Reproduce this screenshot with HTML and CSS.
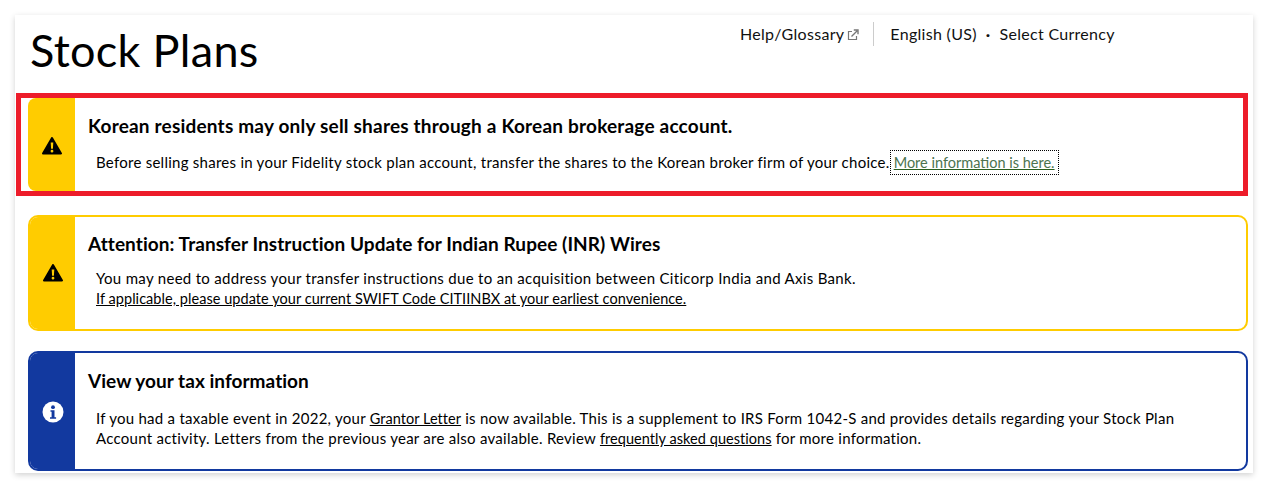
FILE: index.html
```html
<!DOCTYPE html>
<html lang="en">
<head>
<meta charset="utf-8">
<title>Stock Plans</title>
<link rel="stylesheet" href="styles.css">
</head>
<body>
<main class="card">
  <header class="top">
    <h1 class="title">Stock Plans</h1>
    <nav class="util">
      <a class="util-link">Help/Glossary
        <svg class="ext" viewBox="0 0 12 12" width="12" height="12" aria-hidden="true"><path d="M9.5 7v3.5h-8v-8H5" fill="none" stroke="#777" stroke-width="1.2"/><path d="M4.5 7.5 10 2M6.8 1h4.2v4.2" fill="none" stroke="#777" stroke-width="1.4"/></svg>
      </a>
      <span class="divider"></span>
      <span class="util-link">English (US)</span>
      <span class="dot">·</span>
      <span class="util-link">Select Currency</span>
    </nav>
  </header>

  <div class="highlight">
    <section class="alert alert-bare">
      <div class="strip strip-warn">
        <svg class="icon icon-low" viewBox="0 0 20 18" aria-hidden="true"><path d="M10 1 19 16.5H1Z" fill="#000" stroke="#000" stroke-width="2" stroke-linejoin="round"/><path d="M8.7 5.5h2.6l-.4 6.3H9.1ZM10 12.8a1.4 1.4 0 1 1 0 2.8 1.4 1.4 0 0 1 0-2.8Z" fill="#fc0"/></svg>
      </div>
      <div class="content content-first">
        <h2 class="heading">Korean residents may only sell shares through a Korean brokerage account.</h2>
        <p class="text">Before selling shares in your Fidelity stock plan account, transfer the shares to the Korean broker firm of your choice. <a class="focus-link">More information is here.</a></p>
      </div>
    </section>
  </div>

  <section class="alert alert-warn">
    <div class="strip strip-warn">
      <svg class="icon" viewBox="0 0 20 18" aria-hidden="true"><path d="M10 1 19 16.5H1Z" fill="#000" stroke="#000" stroke-width="2" stroke-linejoin="round"/><path d="M8.7 5.5h2.6l-.4 6.3H9.1ZM10 12.8a1.4 1.4 0 1 1 0 2.8 1.4 1.4 0 0 1 0-2.8Z" fill="#fc0"/></svg>
    </div>
    <div class="content content-second">
      <h2 class="heading">Attention: Transfer Instruction Update for Indian Rupee (INR) Wires</h2>
      <p class="text">You may need to address your transfer instructions due to an acquisition between Citicorp India and Axis Bank.<br><a class="link">If applicable, please update your current SWIFT Code CITIINBX at your earliest convenience.</a></p>
    </div>
  </section>

  <section class="alert alert-info">
    <div class="strip strip-info">
      <svg class="icon icon-info" viewBox="0 0 22 22" aria-hidden="true"><circle cx="11" cy="11" r="10.5" fill="#fff"/><circle cx="11" cy="6.2" r="1.9" fill="#12399f"/><path d="M8.5 9.2h4v7h1.6v1.6H8v-1.6h1.6v-5.4H8.5Z" fill="#12399f"/></svg>
    </div>
    <div class="content content-third">
      <h2 class="heading">View your tax information</h2>
      <p class="text">If you had a taxable event in 2022, your <a class="link">Grantor Letter</a> is now available. This is a supplement to IRS Form 1042-S and provides details regarding your Stock Plan Account activity. Letters from the previous year are also available. Review <a class="link">frequently asked questions</a> for more information.</p>
    </div>
  </section>
</main>
</body>
</html>
```
FILE: styles.css
```css
* { box-sizing: border-box; }
html, body { margin: 0; height: 488px; overflow: hidden; background: #fff; }
body { padding: 15px 15px 0; font-family: "Lato", "Noto Sans", sans-serif; color: #000; }
.card {
  width: 1238px; height: 458px; background: #fff;
  box-shadow: 0 2px 6px rgba(0,0,0,.18);
  padding-bottom: 2px;
  display: flex; flex-direction: column;
}
.top { height: 78px; flex: none; display: flex; align-items: flex-start; padding-left: 15px; }
.title { margin: 7px 0 0; font-size: 45px; line-height: 56px; font-weight: 400; letter-spacing: .3px; width: 710px; flex: none; }
.util { display: flex; align-items: center; height: 24px; margin-top: 7px; font-size: 16px; letter-spacing: .3px; color: #111; }
.util-link { display: inline-flex; align-items: center; gap: 3px; padding-bottom: 2px; }
.ext { margin-top: 3px; }
.divider { width: 1px; height: 24px; background: #ccc; margin: 0 16px 0 14px; }
.dot { margin: 0 9px 2px; font-weight: 700; }
.highlight { margin-left: 1px; width: 1232px; height: 103px; border: 5px solid #ed1c2a; padding-left: 7px; flex: none; }
.alert { display: flex; margin-left: 13px; width: 1220px; flex: none; }
.alert-bare { margin: 0; width: 1215px; height: 93px; }
.alert-warn { margin-top: 19px; height: 116px; border: 2px solid #fc0; border-radius: 10px; overflow: hidden; }
.alert-info { margin-top: 20px; height: 120px; border: 2px solid #12399f; border-radius: 10px; overflow: hidden; }
.strip { width: 47px; flex: none; display: flex; align-items: center; justify-content: center; }
.alert-warn .strip, .alert-info .strip { width: 45px; }
.alert-bare .strip { border-radius: 8px 0 0 8px; }
.strip-warn { background: #fc0; }
.strip-info { background: #12399f; }
.icon { width: 20px; height: 18px; display: block; }
.icon-low { margin-top: 2px; }
.icon-info { width: 22px; height: 22px; margin-top: 2px; }
.content { padding: 16px 30px 0 13px; flex: 1; min-width: 0; }
.content-first .text { margin-top: 14px; letter-spacing: .26px; }
.content-second { padding-top: 15px; }
.content-second .heading { letter-spacing: .07px; }
.content-second .text { letter-spacing: .31px; }
.content-third { padding-top: 16px; }
.content-third .heading { letter-spacing: .04px; }
.content-third .text { margin-top: 15px; letter-spacing: .26px; }
.heading { margin: 0; font-size: 19px; line-height: 24px; font-weight: 700; letter-spacing: .2px; }
.text { margin: 12px 0 0 8px; font-size: 15px; line-height: 20px; letter-spacing: .26px; }
.text .link { color: inherit; font-size: 14.5px; line-height: 1; letter-spacing: .05px; text-decoration: underline; }
.text .focus-link { color: #4c7350; font-size: 14.5px; line-height: 1; letter-spacing: 0; text-decoration: underline #2a5f1e; outline: 1px dotted #000; outline-offset: 3px; }
```
